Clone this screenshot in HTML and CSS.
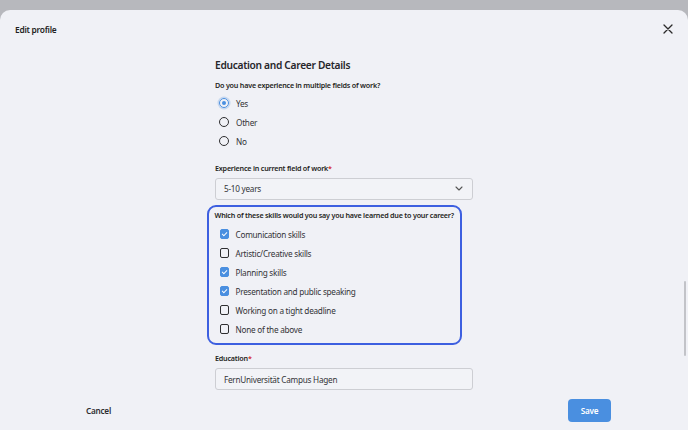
FILE: index.html
```html
<!DOCTYPE html>
<html lang="en">
<head>
  <meta charset="UTF-8">
  <title>Edit profile</title>
  <link rel="stylesheet" href="styles.css">
</head>
<body>
  <div class="modal">
    <header class="modal-head">
      <span class="modal-title">Edit profile</span>
      <svg class="close" width="10" height="10" viewBox="0 0 10 10">
        <path d="M1 1 L9 9 M9 1 L1 9" stroke="#2a2a2a" stroke-width="1.3" stroke-linecap="round"/>
      </svg>
    </header>

    <main class="content">
      <h2 class="section-title">Education and Career Details</h2>

      <p class="field-label">Do you have experience in multiple fields of work?</p>
      <div class="options">
        <label class="option"><span class="radio checked"></span>Yes</label>
        <label class="option"><span class="radio"></span>Other</label>
        <label class="option"><span class="radio"></span>No</label>
      </div>

      <p class="field-label spaced">Experience in current field of work<span class="req">*</span></p>
      <div class="select">
        <span>5-10 years</span>
        <svg width="8" height="5" viewBox="0 0 8 5">
          <path d="M1 1 L4 4 L7 1" fill="none" stroke="#555" stroke-width="1.1" stroke-linecap="round" stroke-linejoin="round"/>
        </svg>
      </div>

      <div class="focus-box">
        <p class="field-label">Which of these skills would you say you have learned due to your career?</p>
        <div class="options">
          <label class="option"><span class="check checked"></span>Comunication skills</label>
          <label class="option"><span class="check"></span>Artistic/Creative skills</label>
          <label class="option"><span class="check checked"></span>Planning skills</label>
          <label class="option"><span class="check checked"></span>Presentation and public speaking</label>
          <label class="option"><span class="check"></span>Working on a tight deadline</label>
          <label class="option"><span class="check"></span>None of the above</label>
        </div>
      </div>

      <p class="field-label edu">Education<span class="req">*</span></p>
      <div class="input">FernUniversität Campus Hagen</div>
    </main>

    <footer class="modal-foot">
      <span class="cancel">Cancel</span>
      <span class="save">Save</span>
    </footer>

    <div class="scroll-thumb"></div>
  </div>
</body>
</html>
```

FILE: styles.css
```css
body
{
  margin: 0;
  background: #b7b8bd;
  font-family: "Noto Sans", "Open Sans", sans-serif;
  color: #2b2b2e;
}
.modal
{
  position: relative;
  margin-top: 10px;
  height: 420px;
  background: #f0f1f6;
  border-radius: 10px 10px 0 0;
  overflow: hidden;
}
.modal-head
{
  height: 38px;
  display: flex;
  align-items: center;
  justify-content: space-between;
  padding: 0 15px 0 15px;
}
.modal-title
{
  font-size: 8.4px;
  letter-spacing: -0.25px;
  font-weight: 600;
  color: #1f1f22;
}
.close
{
  display: block;
}
.content
{
  width: 258px;
  margin-left: 215px;
  padding-top: 10px;
}
.section-title
{
  margin: 0;
  font-size: 10.2px;
  letter-spacing: -0.3px;
  line-height: 14px;
  font-weight: 600;
  color: #26262a;
}
.field-label
{
  margin: 8px 0 0;
  font-size: 7.2px;
  letter-spacing: -0.22px;
  line-height: 10px;
  font-weight: 600;
  color: #1f1f22;
  white-space: nowrap;
}
.field-label.spaced
{
  margin-top: 12px;
}
.field-label.edu
{
  margin-top: 8px;
}
.req
{
  color: #d42a2a;
}
.options
{
  display: flex;
  flex-direction: column;
  margin-top: 3.5px;
}
.option
{
  height: 19px;
  display: flex;
  align-items: center;
  font-size: 8.2px;
  letter-spacing: -0.25px;
  color: #333337;
  padding-left: 4px;
}
.radio
{
  box-sizing: border-box;
  width: 10px;
  height: 10px;
  border: 1.4px solid #2e2e30;
  border-radius: 50%;
  margin-right: 7px;
  position: relative;
}
.radio.checked
{
  border-color: #4a8fe0;
  box-shadow: 0 0 0 1.5px rgba(74, 143, 224, 0.25);
}
.radio.checked::after
{
  content: "";
  position: absolute;
  left: 50%;
  top: 50%;
  width: 4px;
  height: 4px;
  margin: -2px 0 0 -2px;
  border-radius: 50%;
  background: #4a8fe0;
}
.check
{
  box-sizing: border-box;
  width: 9.5px;
  height: 9.5px;
  border: 1.4px solid #2e2e30;
  border-radius: 2px;
  margin: 0 6.5px 0 0.5px;
  position: relative;
}
.check.checked
{
  border-color: #4a8fe0;
  background: #4a8fe0;
}
.check.checked::after
{
  content: "";
  position: absolute;
  left: 2.2px;
  top: 0.3px;
  width: 2px;
  height: 4.2px;
  border: solid #fff;
  border-width: 0 1.2px 1.2px 0;
  transform: rotate(45deg);
}
.select,
.input
{
  box-sizing: border-box;
  height: 22px;
  margin-top: 5px;
  border: 1px solid #cdced3;
  border-radius: 3px;
  background: #f2f3f7;
  display: flex;
  align-items: center;
  justify-content: space-between;
  padding: 0 9px 0 8px;
  font-size: 8.2px;
  letter-spacing: -0.25px;
  color: #333337;
}
.select svg
{
  display: block;
}
.focus-box
{
  box-sizing: border-box;
  width: 255px;
  margin: 5px 0 0 -8px;
  border: 2.5px solid #3d5fe0;
  border-radius: 9px;
  padding: 3.5px 0 4.5px 5.5px;
}
.focus-box .field-label
{
  margin-top: 0;
}
.focus-box .options
{
  margin-top: 4.5px;
}
.focus-box .option
{
  padding-left: 4.5px;
}
.modal-foot
{
  display: flex;
  align-items: center;
  justify-content: space-between;
  margin-top: 9px;
  padding: 0 77px 0 86px;
}
.cancel
{
  font-size: 8.2px;
  letter-spacing: -0.25px;
  font-weight: 600;
  color: #2e2e32;
}
.save
{
  width: 43px;
  height: 23px;
  display: flex;
  align-items: center;
  justify-content: center;
  background: #4a8fe0;
  border-radius: 4px;
  color: #fff;
  font-size: 8.2px;
  letter-spacing: -0.25px;
  font-weight: 600;
}
.scroll-thumb
{
  position: absolute;
  right: 2px;
  top: 271px;
  width: 2px;
  height: 75px;
  border-radius: 1px;
  background: #c2c3c8;
}
```
